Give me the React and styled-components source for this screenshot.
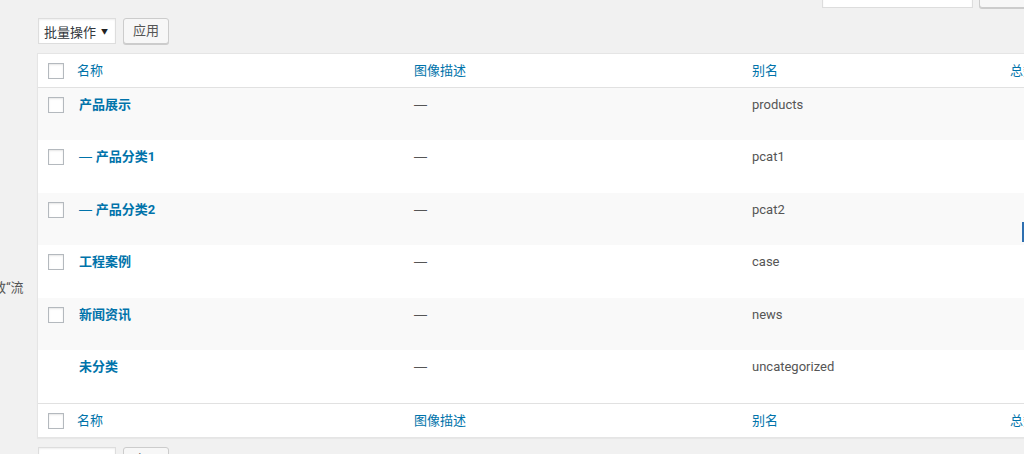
import React from 'react'
import styled, { createGlobalStyle } from 'styled-components'

const GlobalStyle = createGlobalStyle`
  html, body {
    margin: 0;
    padding: 0;
    background: #f1f1f1;
    overflow: hidden;
  }
  body {
    font-family: "Segoe UI", Roboto, "Noto Sans CJK SC", sans-serif;
    font-size: 13px;
    color: #444;
  }
`

const Page = styled.div`
  display: flex;
  width: 1077px;
  height: 454px;
  position: relative;
`

const Gutter = styled.div`
  width: 37px;
  flex: none;
  overflow: hidden;
  padding-top: 279px;
  box-sizing: border-box;
`

const GutterText = styled.div`
  margin-left: -7px;
  white-space: nowrap;
  color: #555;
  line-height: 18px;
`

const Content = styled.div`
  flex: 1;
  display: flex;
  flex-direction: column;
`

const SearchRow = styled.div`
  display: flex;
  justify-content: flex-end;
  gap: 6px;
  margin-top: -20px;
  height: 28px;
`

const SearchInput = styled.div`
  width: 151px;
  height: 28px;
  box-sizing: border-box;
  background: #fff;
  border: 1px solid #ddd;
  box-shadow: inset 0 1px 2px rgba(0, 0, 0, 0.07);
`

const Button = styled.button`
  height: ${p => p.$h || 26}px;
  padding: 0 9px;
  font: inherit;
  font-size: 13px;
  color: #555;
  background: #f7f7f7;
  border: 1px solid #ccc;
  border-radius: 3px;
  box-shadow: 0 1px 0 #ccc;
  white-space: nowrap;
  line-height: 24px;
`

const ActionBar = styled.div`
  display: flex;
  align-items: flex-start;
  gap: 7px;
  margin-top: ${p => p.$top}px;
  padding-left: 1px;
`

const Select = styled.div`
  width: 78px;
  height: 26px;
  box-sizing: border-box;
  display: flex;
  align-items: center;
  justify-content: space-between;
  padding: 0 7px 0 5px;
  background: #fff;
  border: 1px solid #ddd;
  box-shadow: inset 0 1px 2px rgba(0, 0, 0, 0.07);
  color: #32373c;
`

const Caret = styled.span`
  font-size: 7px;
  color: #222;
`

const Table = styled.div`
  margin-top: 9px;
  background: #fff;
  border: 1px solid #e5e5e5;
  box-shadow: 0 1px 1px rgba(0, 0, 0, 0.04);
`

const Row = styled.div`
  display: grid;
  grid-template-columns: 39px 337px 338px 258px 1fr;
  box-sizing: border-box;
  height: ${p => p.$h}px;
  background: ${p => (p.$alt ? '#f9f9f9' : '#fff')};
  border-top: ${p => (p.$top ? '1px solid #e1e1e1' : 'none')};
  border-bottom: ${p => (p.$bottom ? '1px solid #e1e1e1' : 'none')};
  align-items: ${p => (p.$head ? 'center' : 'start')};
  padding-top: ${p => (p.$head ? 0 : 7)}px;
`

const Cell = styled.div`
  line-height: 19px;
  white-space: nowrap;
  color: ${p => p.$color || '#555'};
  font-weight: ${p => (p.$bold ? 700 : 400)};
  padding-left: ${p => (p.$bold ? 2 : 0)}px;
`

const Dash = styled.span`
  font-family: "Liberation Sans", Arial, sans-serif;
  font-weight: 400;
`

const CheckCell = styled.div`
  padding-left: 10px;
  padding-top: ${p => (p.$head ? 0 : 2)}px;
  height: 16px;
`

const Check = styled.span`
  display: block;
  width: 16px;
  height: 16px;
  box-sizing: border-box;
  background: #fff;
  border: 1px solid #b4b9be;
  box-shadow: inset 0 1px 2px rgba(0, 0, 0, 0.1);
`

const Marker = styled.div`
  position: absolute;
  left: 1022px;
  top: 222px;
  width: 2px;
  height: 20px;
  background: #2e6fb0;
`

const rows = [
  { name: '产品展示', slug: 'products', check: true },
  { name: '产品分类1', child: true, slug: 'pcat1', check: true },
  { name: '产品分类2', child: true, slug: 'pcat2', check: true },
  { name: '工程案例', slug: 'case', check: true },
  { name: '新闻资讯', slug: 'news', check: true },
  { name: '未分类', slug: 'uncategorized', check: false }
]

const HeadRow = ({ top, bottom }) => (
  <Row $h={34} $head $top={top} $bottom={bottom}>
    <CheckCell $head><Check /></CheckCell>
    <Cell $color='#0073aa'>名称</Cell>
    <Cell $color='#0073aa'>图像描述</Cell>
    <Cell $color='#0073aa'>别名</Cell>
    <Cell $color='#0073aa'>总数</Cell>
  </Row>
)

const Bulk = ({ top }) => (
  <ActionBar $top={top}>
    <Select>批量操作<Caret>▼</Caret></Select>
    <Button>应用</Button>
  </ActionBar>
)

export default function App () {
  return (
    <Page>
      <GlobalStyle />
      <Gutter>
        <GutterText>敬“流</GutterText>
      </Gutter>
      <Content>
        <SearchRow>
          <SearchInput />
          <Button $h={28}>搜索分类目录</Button>
        </SearchRow>
        <Bulk top={10} />
        <Table>
          <HeadRow bottom />
          {rows.map((r, i) => (
            <Row key={r.slug} $h={i % 2 ? 53 : 52} $alt={i % 2 === 0}>
              <CheckCell>{r.check && <Check />}</CheckCell>
              <Cell $color='#0073aa' $bold>
                {r.child && <Dash>— </Dash>}{r.name}
              </Cell>
              <Cell><Dash>—</Dash></Cell>
              <Cell>{r.slug}</Cell>
              <Cell />
            </Row>
          ))}
          <HeadRow top />
        </Table>
        <Bulk top={9} />
      </Content>
      <Marker />
    </Page>
  )
}
